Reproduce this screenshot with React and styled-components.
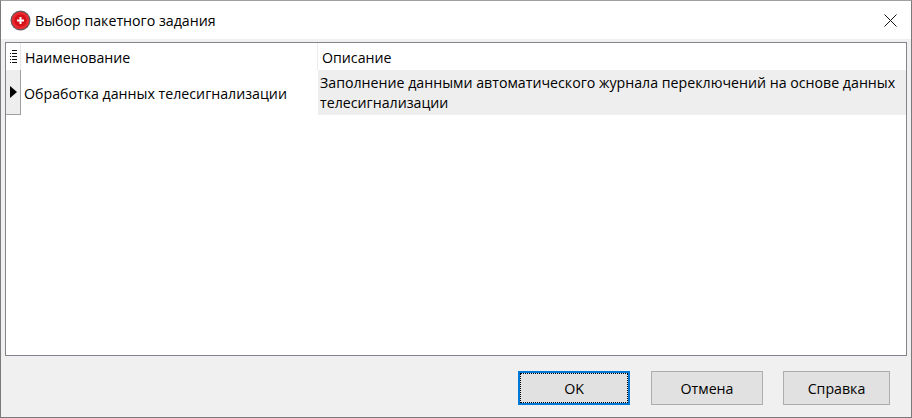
import styled, { createGlobalStyle } from 'styled-components';

const GlobalStyle = createGlobalStyle`
  html, body {
    margin: 0;
    padding: 0;
    background: #f0f0f0;
  }
`;

const Window = styled.div`
  display: flex;
  flex-direction: column;
  box-sizing: border-box;
  width: 912px;
  height: 418px;
  background: #f0f0f0;
  border: 1px solid #7a7a7a;
  border-top-color: #a0a0a0;
  font-family: "Open Sans", "Noto Sans", sans-serif;
  font-size: 14.2px;
  color: #000;
`;

const TitleBar = styled.div`
  display: flex;
  align-items: center;
  flex: none;
  height: 38px;
  padding: 0 14px 0 9px;
  background: #fff;
  gap: 4px;
`;

const Title = styled.div`
  flex: 1;
`;

const Content = styled.div`
  display: flex;
  flex: 1;
  min-height: 0;
  padding: 3px 4px 0 4px;
`;

const Table = styled.div`
  display: grid;
  flex: 1;
  grid-template-columns: 15px 297px 1fr;
  grid-template-rows: 27px 45px 1fr;
  background: #fff;
  border: 1px solid #83838c;
`;

const HeaderMark = styled.div`
  display: flex;
  align-items: center;
  justify-content: center;
  border-right: 1px solid #e6e6e6;
`;

const HeaderCell = styled.div`
  display: flex;
  align-items: center;
  padding: 2px 0 0 ${(props) => props.$indent}px;
  border-right: ${(props) => (props.$divider ? '1px solid #ececec' : 'none')};
`;

const RowMark = styled.div`
  display: flex;
  align-items: center;
  padding-left: 4px;
  background: #eeeeee;
  border-right: 1px solid #a0a0a0;
  border-bottom: 1px solid #a0a0a0;
`;

const NameCell = styled.div`
  display: flex;
  align-items: center;
  padding: 2px 0 0 3px;
`;

const DescriptionCell = styled.div`
  padding: 3px 0 0 2px;
  background: #eeeeee;
  line-height: 20px;
`;

const Footer = styled.div`
  display: flex;
  flex: none;
  justify-content: flex-end;
  gap: 20px;
  height: 61px;
  padding: 15px 21px 0 0;
  box-sizing: border-box;
`;

const Button = styled.button`
  box-sizing: border-box;
  width: ${(props) => props.$width}px;
  height: 34px;
  margin-right: ${(props) => (props.$active ? '1px' : '0')};
  padding: 0;
  position: relative;
  background: #e1e1e1;
  border: ${(props) => (props.$active ? '2px solid #0078d7' : '1px solid #adadad')};
  font: inherit;
  color: #000;

  &::after {
    content: '';
    display: ${(props) => (props.$active ? 'block' : 'none')};
    position: absolute;
    inset: 0;
    border: 1px dotted #000;
  }
`;

const SpacerGap = styled.div`
  grid-column: 1 / -1;
`;

function AppIcon() {
  return (
    <svg width="21" height="21" viewBox="0 0 21 21">
      <circle cx="10.5" cy="10.5" r="10" fill="#5f5f5f" />
      <circle cx="10.5" cy="10.5" r="8.8" fill="#ea2a30" />
      <circle cx="10.5" cy="10.5" r="6.2" fill="#d5121a" />
      <path d="M9.5 7h2v2.5H14v2h-2.5V14h-2v-2.5H7v-2h2.5z" fill="#fff" />
    </svg>
  );
}

function CloseIcon() {
  return (
    <svg width="13" height="13" viewBox="0 0 13 13">
      <path d="M0.5 0.5L12.5 12.5M12.5 0.5L0.5 12.5" stroke="#111" strokeWidth="1" />
    </svg>
  );
}

function ColumnsIcon() {
  return (
    <svg width="7" height="13" viewBox="0 0 7 13" shapeRendering="crispEdges">
      <path d="M2 0h5v1H2zM0 3h1v1H0zM2 3h5v1H2zM0 6h1v1H0zM2 6h5v1H2zM0 9h1v1H0zM2 9h5v1H2zM0 12h1v1H0zM2 12h5v1H2z" fill="#111" />
    </svg>
  );
}

function RowArrow() {
  return (
    <svg width="7" height="12" viewBox="0 0 7 12">
      <path d="M0 0L7 6L0 12z" fill="#000" />
    </svg>
  );
}

export default function App() {
  return (
    <Window>
      <GlobalStyle />
      <TitleBar>
        <AppIcon />
        <Title>Выбор пакетного задания</Title>
        <CloseIcon />
      </TitleBar>
      <Content>
        <Table>
          <HeaderMark>
            <ColumnsIcon />
          </HeaderMark>
          <HeaderCell $indent={4} $divider>
            Наименование
          </HeaderCell>
          <HeaderCell $indent={4}>Описание</HeaderCell>
          <RowMark>
            <RowArrow />
          </RowMark>
          <NameCell>Обработка данных телесигнализации</NameCell>
          <DescriptionCell>
            Заполнение данными автоматического журнала переключений на основе данных телесигнализации
          </DescriptionCell>
          <SpacerGap />
        </Table>
      </Content>
      <Footer>
        <Button $width={112} $active>
          OK
        </Button>
        <Button $width={112}>Отмена</Button>
        <Button $width={107}>Справка</Button>
      </Footer>
    </Window>
  );
}
